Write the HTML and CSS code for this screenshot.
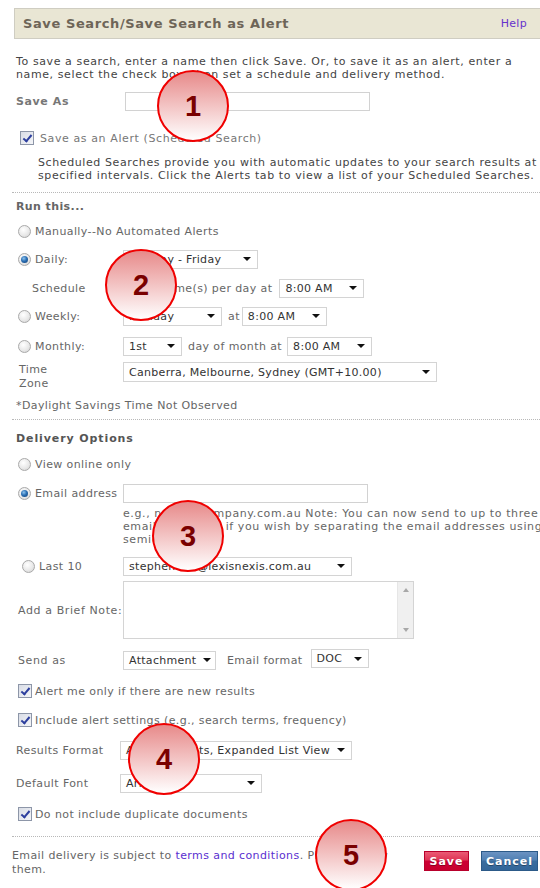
FILE: index.html
```html
<!DOCTYPE html>
<html lang="en">
<head>
<meta charset="utf-8">
<title>Save Search</title>
<link rel="stylesheet" href="styles.css">
</head>
<body>
<div class="page">
  <div class="titlebar">
    <h1>Save Search/Save Search as Alert</h1>
    <a class="help" href="#">Help</a>
  </div>

  <p class="intro">To save a search, enter a name then click Save. Or, to save it as an alert, enter a<br>name, select the check box, then set a schedule and delivery method.</p>

  <div class="row r-saveas">
    <span class="lab lab-save strong">Save As</span>
    <span class="input w-save"></span>
  </div>

  <div class="row r-alert">
    <span class="check"></span><span class="ctext">Save as an Alert (Scheduled Search)</span>
  </div>

  <p class="schednote">Scheduled Searches provide you with automatic updates to your search results at<br>specified intervals. Click the Alerts tab to view a list of your Scheduled Searches.</p>

  <hr class="dots d1">

  <h2 class="sect s-run">Run this...</h2>

  <div class="row r-manual"><span class="radio"></span><span class="rtext">Manually--No Automated Alerts</span></div>

  <div class="row r-daily">
    <span class="lab"><span class="radio on"></span><span class="rtext">Daily:</span></span>
    <span class="select w-days"><span>Monday - Friday</span><i class="caret"></i></span>
  </div>

  <div class="row r-schedule">
    <span class="lab"><span class="indent">Schedule</span></span>
    <span class="select w-one"><span>1</span><i class="caret"></i></span>
    <span class="txt">time(s) per day at</span>
    <span class="select w-time"><span>8:00 AM</span><i class="caret"></i></span>
  </div>

  <div class="row r-weekly">
    <span class="lab"><span class="radio"></span><span class="rtext">Weekly:</span></span>
    <span class="select w-day"><span>Monday</span><i class="caret"></i></span>
    <span class="txt">at</span>
    <span class="select w-time"><span>8:00 AM</span><i class="caret"></i></span>
  </div>

  <div class="row r-monthly">
    <span class="lab"><span class="radio"></span><span class="rtext">Monthly:</span></span>
    <span class="select w-nth"><span>1st</span><i class="caret"></i></span>
    <span class="txt">day of month at</span>
    <span class="select w-time"><span>8:00 AM</span><i class="caret"></i></span>
  </div>

  <div class="row r-zone">
    <span class="lab"><span class="zone">Time<br>Zone</span></span>
    <span class="select w-zone"><span>Canberra, Melbourne, Sydney (GMT+10.00)</span><i class="caret"></i></span>
  </div>

  <p class="dst">*Daylight Savings Time Not Observed</p>

  <hr class="dots d2">

  <h2 class="sect s-deliv">Delivery Options</h2>

  <div class="row r-online"><span class="radio"></span><span class="rtext">View online only</span></div>

  <div class="row r-email">
    <span class="lab"><span class="radio on"></span><span class="rtext">Email address</span></span>
    <span class="input w-email"></span>
  </div>

  <p class="emailnote">e.g., name@company.com.au Note: You can now send to up to three<br>email addresses if you wish by separating the email addresses using<br>semicolons.</p>

  <div class="row r-last">
    <span class="lab lab-last"><span class="radio"></span><span class="rtext">Last 10</span></span>
    <span class="select w-last"><span>stephen.lee@lexisnexis.com.au</span><i class="caret"></i></span>
  </div>

  <div class="row r-note">
    <span class="lab lab-note">Add a Brief Note:</span>
    <span class="textarea">
      <span class="ta-body"></span>
      <span class="ta-bar"><i class="up"></i><i class="down"></i></span>
    </span>
  </div>

  <div class="row r-send">
    <span class="lab lab-note">Send as</span>
    <span class="select w-attach"><span>Attachment</span><i class="caret"></i></span>
    <span class="txt fmt">Email format</span>
    <span class="select w-doc"><span>DOC</span><i class="caret"></i></span>
  </div>

  <div class="row r-new"><span class="check"></span><span class="ctext">Alert me only if there are new results</span></div>

  <div class="row r-incl"><span class="check"></span><span class="ctext">Include alert settings (e.g., search terms, frequency)</span></div>

  <div class="row r-results">
    <span class="lab lab-fmt">Results Format</span>
    <span class="select w-results"><span>All Documents, Expanded List View</span><i class="caret"></i></span>
  </div>

  <div class="row r-font">
    <span class="lab lab-fmt">Default Font</span>
    <span class="select w-font"><span>Arial</span><i class="caret"></i></span>
  </div>

  <div class="row r-dup"><span class="check"></span><span class="ctext">Do not include duplicate documents</span></div>

  <hr class="dots d3">

  <div class="footer">
    <p class="terms">Email delivery is subject to <a href="#">terms and conditions</a>. Please review<br>them.</p>
    <div class="buttons">
      <button class="btn save">Save</button>
      <button class="btn cancel">Cancel</button>
    </div>
  </div>

  <!-- numbered step callouts -->
  <span class="callout c1">1</span>
  <span class="callout c2">2</span>
  <span class="callout c3">3</span>
  <span class="callout c4">4</span>
  <span class="callout c5">5</span>
</div>
</body>
</html>
```

FILE: styles.css
```css
* { box-sizing: border-box; }

html, body {
  margin: 0;
  padding: 0;
  background: #fff;
}

body {
  width: 540px;
  height: 888px;
  overflow: hidden;
  font-family: "DejaVu Sans", Verdana, sans-serif;
  font-size: 11px;
  letter-spacing: 0.6px;
  color: #666;
}

.page {
  position: relative;
  width: 640px;
  padding: 8px 0 0 12px;
}

/* title bar */
.titlebar {
  margin-left: 2px;
  width: 540px;
  height: 31px;
  background: #e9e6d4;
  border: 1px solid #cfcdc2;
  border-right: none;
  display: flex;
  align-items: center;
  justify-content: space-between;
  padding: 0 27px 0 8px;
}

.titlebar h1 {
  margin: 0;
  font-size: 13px;
  font-weight: bold;
  color: #6e6558;
}

.help {
  font-size: 11px;
  letter-spacing: 0.3px;
  color: #6633cc;
  text-decoration: none;
}

p { margin: 0; }

.intro {
  margin-top: 16px;
  padding-left: 4px;
  line-height: 13px;
  color: #444;
  white-space: nowrap;
}

/* generic form rows */
.row {
  display: flex;
  align-items: center;
  padding-left: 6px;
  white-space: nowrap;
  letter-spacing: 0.4px;
}

.lab {
  width: 105px;
  flex: none;
  display: flex;
  align-items: center;
}

.strong { font-weight: bold; color: #777; letter-spacing: 0.6px; }

.r-saveas { margin-top: 10px; height: 20px; padding-left: 4px; }
.lab-save { width: 109px; }

.r-alert { margin-top: 19px; height: 16px; padding-left: 8px; }
.r-alert .ctext { margin-left: 6px; color: #777; letter-spacing: 0.6px; }

.schednote {
  margin-top: 10px;
  padding-left: 26px;
  line-height: 13px;
  color: #444;
  white-space: nowrap;
}

hr.dots {
  margin: 0;
  height: 0;
  border: none;
  border-top: 1px dotted #b8b8b8;
}
hr.dots.d1 { margin-top: 10px; }
hr.dots.d2 { margin-top: 6px; }
hr.dots.d3 { margin-top: 14px; }

.sect {
  margin: 0;
  padding-left: 4px;
  height: 14px;
  line-height: 14px;
  font-size: 11px;
  font-weight: bold;
  color: #666;
}
.s-run { margin-top: 7px; letter-spacing: 0.4px; }
.s-deliv { margin-top: 12px; color: #555; letter-spacing: 0.9px; }

.r-manual { margin-top: 9px; height: 16px; }
.r-daily { margin-top: 10px; height: 20px; }
.r-schedule { margin-top: 9px; height: 20px; }
.r-weekly { margin-top: 8px; height: 20px; }
.r-monthly { margin-top: 10px; height: 20px; }
.r-zone { margin-top: 6px; height: 30px; align-items: flex-start; }
.r-online { margin-top: 10px; height: 16px; }
.r-email { margin-top: 11px; height: 20px; }
.r-last { margin-top: 10px; height: 20px; }
.r-note { margin-top: 5px; height: 58px; }
.r-send { margin-top: 11px; height: 20px; }
.r-new { margin-top: 13px; height: 16px; }
.r-incl { margin-top: 13px; height: 16px; }
.r-results { margin-top: 12px; height: 20px; padding-left: 4px; }
.r-font { margin-top: 13px; height: 20px; padding-left: 4px; }
.r-dup { margin-top: 13px; height: 16px; }

.rtext { margin-left: 4px; }
.ctext { margin-left: 3px; }
.indent { padding-left: 14px; }
.zone { padding-left: 1px; padding-top: 1px; line-height: 14px; }
.lab-last { padding-left: 4px; }
.lab-note { width: 105px; letter-spacing: 0.6px; }
.lab-fmt { width: 104px; }

.txt { margin: 0 5px 0 6px; }
.r-schedule .txt { margin-right: 7px; }
.r-weekly .txt { margin-right: 2px; }
.fmt { margin: 0 8px 0 11px; }

.dst {
  margin-top: 7px;
  padding-left: 4px;
  height: 14px;
  line-height: 14px;
  letter-spacing: 0.4px;
}

.emailnote {
  margin-top: 4px;
  padding-left: 111px;
  line-height: 13px;
  white-space: nowrap;
}

/* radio buttons */
.radio {
  flex: none;
  width: 13px;
  height: 13px;
  border-radius: 50%;
  border: 1px solid #a9a9a9;
  background: radial-gradient(circle at 40% 35%, #ffffff 0%, #e9e9e9 55%, #cfcfcf 100%);
  position: relative;
}
.radio.on::after {
  content: "";
  position: absolute;
  left: 2px;
  top: 2px;
  width: 7px;
  height: 7px;
  border-radius: 50%;
  background: radial-gradient(circle at 40% 35%, #8fc4ee 0%, #2a6fb4 45%, #123c70 100%);
}

/* checkboxes */
.check {
  flex: none;
  width: 14px;
  height: 14px;
  border: 1px solid #8d96a8;
  background: linear-gradient(135deg, #d9dde6 0%, #f4f5f8 100%);
  position: relative;
}
.check::after {
  content: "";
  position: absolute;
  left: 4px;
  top: 1px;
  width: 3px;
  height: 7px;
  border-right: 2px solid #2d3f9e;
  border-bottom: 2px solid #2d3f9e;
  transform: rotate(40deg);
}

/* text inputs */
.input {
  display: block;
  height: 19px;
  border: 1px solid #d2d2d2;
  background: #fff;
}
.w-save { width: 245px; }
.w-email { width: 245px; }

/* drop-downs */
.select {
  flex: none;
  display: inline-flex;
  align-items: center;
  justify-content: space-between;
  height: 19px;
  padding: 0 6px 0 5px;
  border: 1px solid #d4d4d4;
  background: #fff;
  color: #333;
  font-size: 11px;
  letter-spacing: 0.3px;
}
.caret {
  width: 0;
  height: 0;
  border-left: 4px solid transparent;
  border-right: 4px solid transparent;
  border-top: 4px solid #111;
  margin-left: 6px;
}
.w-days { width: 135px; }
.w-one { width: 37px; }
.w-time { width: 85px; }
.w-day { width: 99px; }
.w-nth { width: 59px; }
.w-zone { width: 314px; height: 20px; }
.w-last { width: 229px; }
.w-attach { width: 93px; }
.w-doc { width: 58px; margin-top: -3px; }
.w-results { width: 232px; }
.w-font { width: 142px; }

/* multi-line note */
.textarea {
  display: flex;
  width: 291px;
  height: 58px;
  border: 1px solid #d4d4d4;
  background: #fff;
}
.ta-body { flex: 1; }
.ta-bar {
  width: 16px;
  background: #f0f0f0;
  border-left: 1px solid #e6e6e6;
  display: flex;
  flex-direction: column;
  justify-content: space-between;
  align-items: center;
  padding: 6px 0;
}
.ta-bar .up {
  width: 0; height: 0;
  border-left: 3px solid transparent;
  border-right: 3px solid transparent;
  border-bottom: 4px solid #a8a8a8;
}
.ta-bar .down {
  width: 0; height: 0;
  border-left: 3px solid transparent;
  border-right: 3px solid transparent;
  border-top: 4px solid #a8a8a8;
}

/* footer */
.footer {
  margin-top: 12px;
  display: flex;
  align-items: flex-start;
}
.terms {
  width: 412px;
  line-height: 14px;
  white-space: nowrap;
  letter-spacing: 0.4px;
}
.terms a { color: #5a2fd0; text-decoration: none; }

.buttons {
  display: flex;
  gap: 12px;
  margin-top: 2px;
}
.btn {
  height: 20px;
  padding: 0;
  border: 1px solid;
  font-family: "DejaVu Sans", Verdana, sans-serif;
  font-size: 11px;
  font-weight: bold;
  letter-spacing: 1px;
  color: #fff;
  text-shadow: 0 1px 0 rgba(0,0,0,0.35);
}
.save {
  width: 45px;
  border-color: #b8002c;
  background: linear-gradient(#ea5a74 0%, #de3454 45%, #cc0033 50%, #c8002f 100%);
}
.cancel {
  width: 57px;
  border-color: #2c5a88;
  background: linear-gradient(#6b93c2 0%, #4f7fb2 45%, #3a6d9f 50%, #336699 100%);
}

/* numbered step callouts */
.callout {
  position: absolute;
  width: 72px;
  height: 72px;
  border-radius: 50%;
  border: 2px solid #f00000;
  background: linear-gradient(#e78a8a 0%, #f3c4c4 50%, #ffffff 100%);
  display: flex;
  align-items: center;
  justify-content: center;
  font-family: "Liberation Sans", Arial, sans-serif;
  font-size: 29px;
  font-weight: bold;
  letter-spacing: 0;
  color: #7a0000;
}
.c1 { left: 157px; top: 70px; }
.c2 { left: 105px; top: 249px; }
.c3 { left: 152px; top: 500px; }
.c4 { left: 128px; top: 723px; }
.c5 { left: 315px; top: 819px; }
```
